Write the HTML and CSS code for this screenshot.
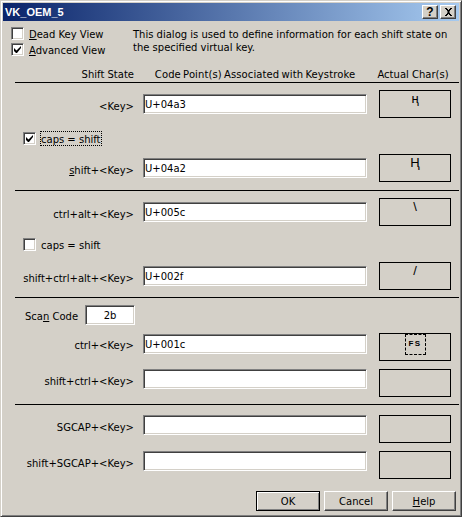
FILE: index.html
```html
<!DOCTYPE html>
<html lang="en">
  <head>
    <meta charset="UTF-8" />
    <meta name="viewport" content="width=device-width, initial-scale=1.0" />
    <title>VK_OEM_5</title>
    <link rel="stylesheet" href="styles.css">
  </head>
  <body>
    <div class="window">
      <header class="titlebar">
        <span class="titlebar-text">VK_OEM_5</span>
        <button class="cap-btn cap-help">?</button>
        <button class="cap-btn cap-close">
          <svg width="9" height="8" viewBox="0 0 9 8"><path d="M1 0h2v1h1v1h1V1h1V0h2v1H7v1H6v1H5.500v2H6v1h1v1h1v1H6V7H5V6H4v1H3v1H1V7h1V6h1V5h.5V3H3V2H2V1H1z" fill="#000"/></svg>
        </button>
      </header>

      <section class="top">
        <div class="views">
          <label class="check-row">
            <span class="check"></span>
            <span class="check-text"><u>D</u>ead Key View</span>
          </label>
          <label class="check-row">
            <span class="check">
              <svg width="9" height="9" viewBox="0 0 9 9"><path d="M1 3v3l2 2h1l4-5V1L3.500 5.500z" fill="#000"/></svg>
            </span>
            <span class="check-text"><u>A</u>dvanced View</span>
          </label>
        </div>
        <p class="intro">This dialog is used to define information for each shift state on the specified virtual key.</p>
      </section>

      <div class="row headers">
        <span class="label">Shift State</span>
        <span class="head-mid">Code Point(s) Associated with Keystroke</span>
        <span class="head-end">Actual Char(s)</span>
      </div>

      <section class="group group-first">
        <div class="row">
          <span class="label">&lt;Key&gt;</span>
          <input class="field" type="text" value="U+04a3" />
          <div class="char-box"><span class="glyph">ң</span></div>
        </div>
        <div class="caps-row">
          <label class="check-row">
            <span class="check">
              <svg width="9" height="9" viewBox="0 0 9 9"><path d="M1 3v3l2 2h1l4-5V1L3.500 5.500z" fill="#000"/></svg>
            </span>
            <span class="check-text focused">caps = shift</span>
          </label>
        </div>
        <div class="row">
          <span class="label"><u>s</u>hift+&lt;Key&gt;</span>
          <input class="field" type="text" value="U+04a2" />
          <div class="char-box"><span class="glyph">Ң</span></div>
        </div>
      </section>

      <section class="group">
        <div class="row">
          <span class="label">ctrl+alt+&lt;Key&gt;</span>
          <input class="field" type="text" value="U+005c" />
          <div class="char-box"><span class="glyph">\</span></div>
        </div>
        <div class="caps-row">
          <label class="check-row">
            <span class="check"></span>
            <span class="check-text">caps = shift</span>
          </label>
        </div>
        <div class="row">
          <span class="label">shift+ctrl+alt+&lt;Key&gt;</span>
          <input class="field" type="text" value="U+002f" />
          <div class="char-box"><span class="glyph">/</span></div>
        </div>
      </section>

      <section class="group group-scan">
        <div class="scan-row">
          <span class="check-text">Sca<u>n</u> Code</span>
          <input class="field scan-field" type="text" value="2b" />
        </div>
        <div class="row row-top">
          <span class="label">ctrl+&lt;Key&gt;</span>
          <input class="field field-low" type="text" value="U+001c" />
          <div class="char-box"><span class="ctrl-char">FS</span></div>
        </div>
        <div class="row row-top">
          <span class="label">shift+ctrl+&lt;Key&gt;</span>
          <input class="field" type="text" />
          <div class="char-box"></div>
        </div>
      </section>

      <section class="group group-last">
        <div class="row row-top">
          <span class="label">SGCAP+&lt;Key&gt;</span>
          <input class="field" type="text" />
          <div class="char-box"></div>
        </div>
        <div class="row row-top">
          <span class="label">shift+SGCAP+&lt;Key&gt;</span>
          <input class="field" type="text" />
          <div class="char-box"></div>
        </div>
      </section>

      <footer class="actions">
        <button class="btn btn-default">OK</button>
        <button class="btn">Cancel</button>
        <button class="btn"><u>H</u>elp</button>
      </footer>
    </div>
  </body>
</html>
```

FILE: styles.css
```css
:root {
  --face: #d4d0c8;
  --shadow: #808080;
  --dark: #404040;
  --text-color: #000;
}

html {
  box-sizing: border-box;
}

*,
*::before,
::after {
  box-sizing: border-box;
}

body {
  margin: 0;
  overflow: hidden;
  background-color: var(--face);
  color: var(--text-color);
  font-family: "DejaVu Sans", Verdana, sans-serif;
  font-size: 10px;
}

u {
  text-underline-offset: 1px;
}

.window {
  width: 462px;
  height: 517px;
  padding: 2px;
  border: 1px solid;
  border-color: #d4d0c8 var(--dark) var(--dark) #d4d0c8;
  box-shadow: inset 1px 1px 0 #fff, inset -1px -1px 0 var(--shadow);
  background-color: var(--face);
}

/* title bar */
.titlebar {
  display: flex;
  align-items: center;
  height: 18px;
  padding: 0 3px 0 2px;
  background: linear-gradient(to right, #0a246a, #a6caf0);
}

.titlebar-text {
  flex: 1;
  color: #fff;
  font-family: "Liberation Sans", Arial, sans-serif;
  font-size: 11px;
  font-weight: bold;
}

.cap-btn {
  display: flex;
  align-items: center;
  justify-content: center;
  width: 16px;
  height: 14px;
  margin-left: 2px;
  padding: 0;
  border: 1px solid;
  border-color: #fff var(--dark) var(--dark) #fff;
  box-shadow: inset -1px -1px 0 var(--shadow);
  background-color: var(--face);
  font-family: "Liberation Sans", Arial, sans-serif;
  font-size: 12px;
  font-weight: bold;
  line-height: 1;
}

/* top options */
.top {
  display: flex;
  height: 44px;
  padding: 4px 0 0 8px;
}

.views {
  display: flex;
  flex-direction: column;
  flex: none;
  width: 122px;
}

.check-row {
  display: flex;
  align-items: center;
  gap: 5px;
  height: 16px;
}

.check-text {
  padding-top: 2px;
}

.check {
  display: flex;
  align-items: center;
  justify-content: center;
  width: 13px;
  height: 13px;
  border: 1px solid;
  border-color: var(--shadow) #fff #fff var(--shadow);
  box-shadow: inset 1px 1px 0 var(--dark), inset -1px -1px 0 var(--face);
  background-color: #fff;
}

.intro {
  width: 322px;
  margin: 3px 0 0;
  line-height: 13px;
}

/* rows */
.row {
  display: flex;
  align-items: center;
  height: 28px;
}

.row-top {
  align-items: flex-start;
}

.label {
  flex: none;
  width: 131px;
  margin-right: 9px;
  padding-top: 4px;
  text-align: right;
  white-space: nowrap;
}

.row-top .label {
  padding-top: 3px;
  line-height: 20px;
}

.headers {
  height: 16px;
  margin-top: 1px;
  margin-left: 0;
}

.headers .label {
  padding-top: 0;
}

.head-mid {
  flex: none;
  width: 224px;
  margin-right: 10px;
  white-space: nowrap;
  text-align: center;
  word-spacing: -1px;
  letter-spacing: 0.1px;
}

.head-end {
  flex: none;
  width: 72px;
  text-align: center;
  white-space: nowrap;
}

.group {
  width: 444px;
  margin-left: 12px;
  padding: 7px 0;
  border-top: 1px solid #000;
}

.group-first {
  padding-bottom: 8px;
}

.group .row,
.caps-row,
.scan-row {
  margin-left: -12px;
}

.caps-row {
  display: flex;
  align-items: center;
  height: 36px;
  padding-top: 1px;
  padding-left: 20px;
}

.group-first .caps-row {
  padding-top: 4px;
}

.scan-row {
  display: flex;
  align-items: center;
  gap: 7px;
  height: 20px;
  margin-bottom: 8px;
  padding-left: 22px;
}

.group-scan .row + .row {
  margin-top: 8px;
}

.group-last {
  padding-top: 10px;
  padding-bottom: 0;
}

.group-last .row + .row {
  margin-top: 8px;
}

.field {
  flex: none;
  width: 224px;
  height: 20px;
  margin: 0 12px 0 0;
  padding: 0 1px;
  border: 1px solid;
  border-color: var(--shadow) #fff #fff var(--shadow);
  border-radius: 0;
  box-shadow: inset 1px 1px 0 var(--dark), inset -1px -1px 0 var(--face);
  outline: none;
  background-color: #fff;
  color: var(--text-color);
  font: inherit;
}

.field-low {
  margin-top: 1px;
}

.scan-field {
  width: 50px;
  margin: 0;
  text-align: center;
}

.char-box {
  display: flex;
  flex: none;
  justify-content: center;
  width: 72px;
  height: 28px;
  border: 1px solid #000;
}

.glyph {
  font-family: "Liberation Sans", Arial, sans-serif;
  font-size: 13px;
  line-height: 16px;
}

.ctrl-char {
  width: 21px;
  height: 21px;
  border: 1px dashed #000;
  font-family: "Liberation Sans", Arial, sans-serif;
  font-size: 8px;
  font-weight: bold;
  line-height: 18px;
  letter-spacing: 1.5px;
  text-align: center;
}

/* buttons */
.actions {
  display: flex;
  justify-content: flex-end;
  gap: 4px;
  margin-top: 12px;
  padding-right: 3px;
}

.btn {
  width: 64px;
  height: 20px;
  padding: 0;
  border: 1px solid;
  border-color: #fff var(--dark) var(--dark) #fff;
  box-shadow: inset -1px -1px 0 var(--shadow);
  background-color: var(--face);
  color: var(--text-color);
  font: inherit;
}

.btn-default {
  border-color: #000;
  box-shadow: inset 1px 1px 0 #fff, inset -1px -1px 0 var(--shadow);
}

.focused {
  outline: 1px dotted #000;
}
```
